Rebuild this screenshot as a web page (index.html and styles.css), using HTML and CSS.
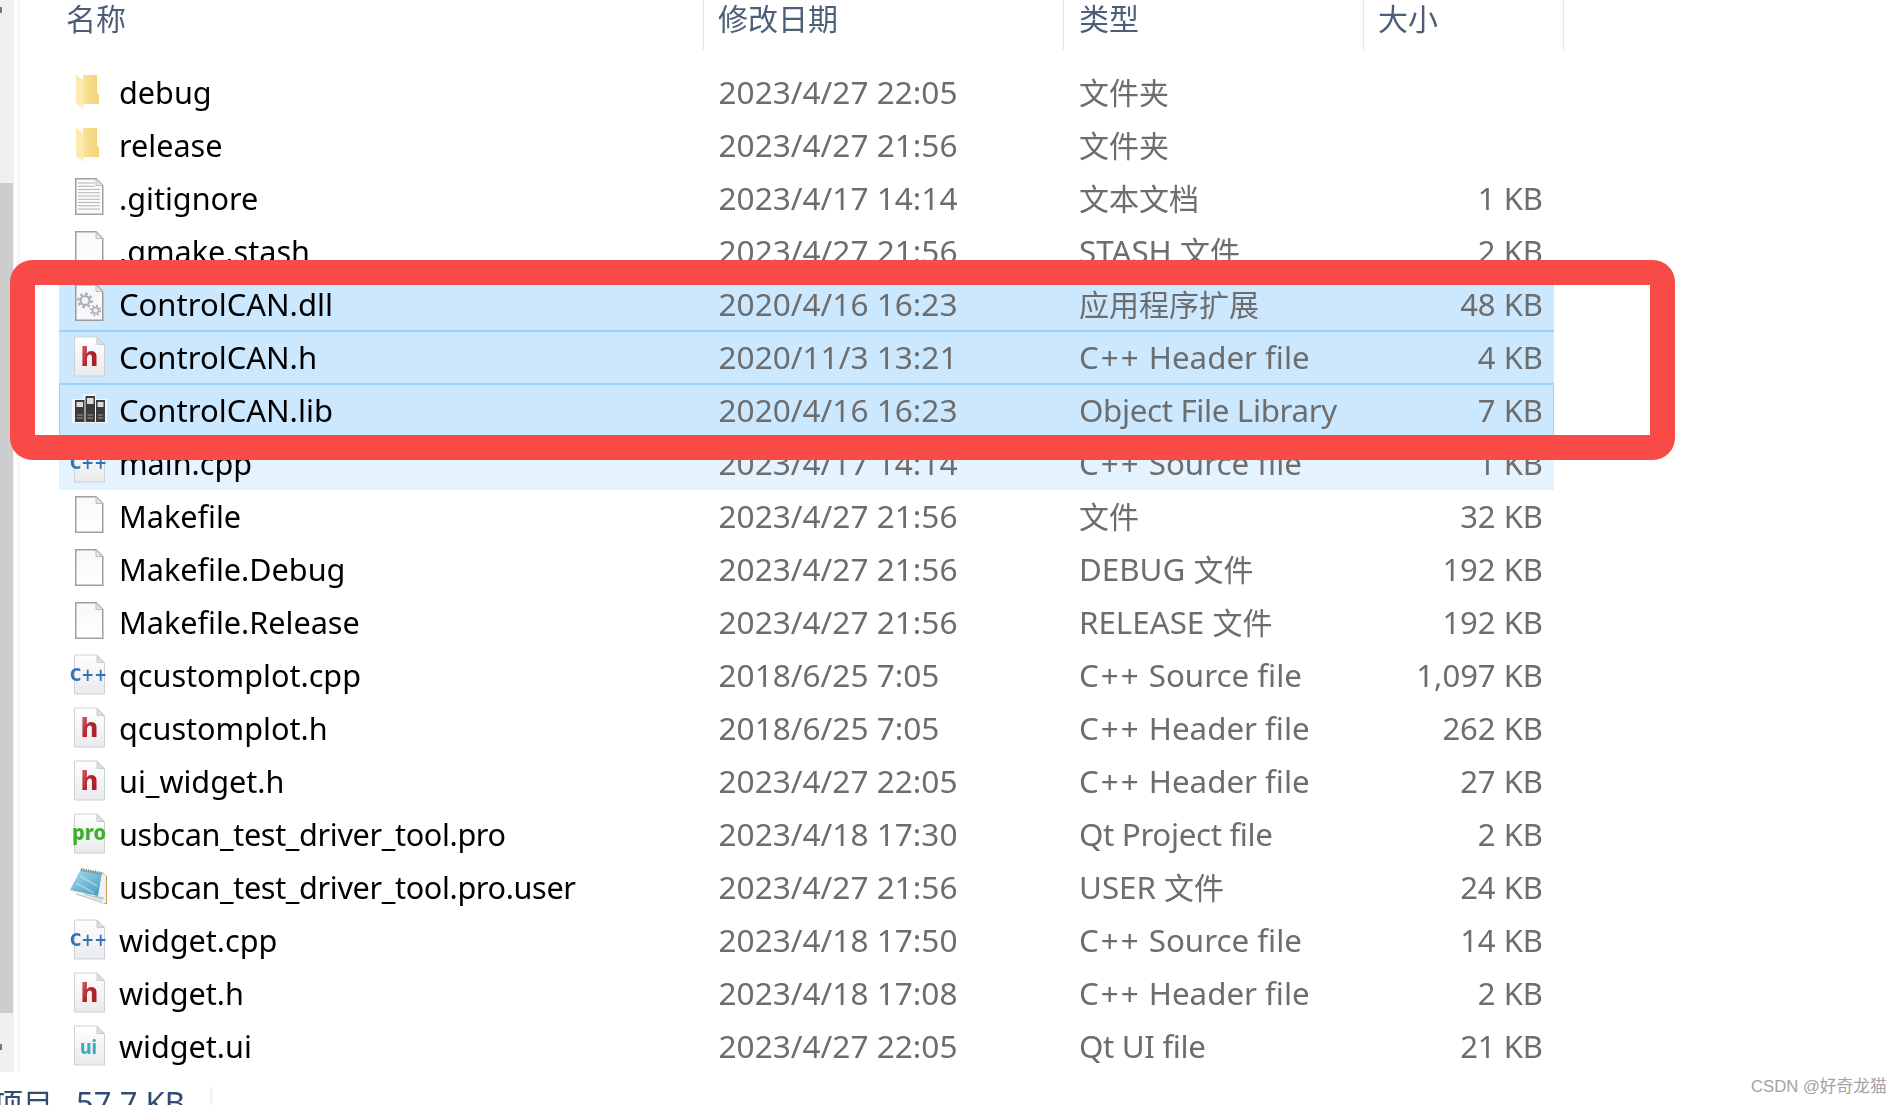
FILE: index.html
```html
<!DOCTYPE html>
<html lang="zh-CN">
<head>
<meta charset="utf-8">
<title>usbcan_test_driver_tool</title>
<link rel="stylesheet" href="styles.css">
</head>
<body>
<svg class="defs" aria-hidden="true">
  <defs>
    <linearGradient id="paper" x1="0" y1="0" x2="0" y2="1"><stop offset="0" stop-color="#ffffff"/><stop offset="1" stop-color="#e9eaec"/></linearGradient>
    <linearGradient id="plain" x1="0" y1="0" x2="0" y2="1"><stop offset="0" stop-color="#f6f8fa"/><stop offset="1" stop-color="#ffffff"/></linearGradient>
    <linearGradient id="fold" x1="0" y1="0" x2="1" y2="0"><stop offset="0" stop-color="#fce9a6"/><stop offset="1" stop-color="#f2d274"/></linearGradient>
    <linearGradient id="red" x1="0" y1="0" x2="1" y2="1"><stop offset="0" stop-color="#dd7a80"/><stop offset="0.5" stop-color="#b3242b"/><stop offset="1" stop-color="#a81c22"/></linearGradient>
    <linearGradient id="note" x1="0" y1="0" x2="0.7" y2="1"><stop offset="0" stop-color="#a7d8e8"/><stop offset="0.5" stop-color="#7cc0d9"/><stop offset="1" stop-color="#4f9fc2"/></linearGradient>
    <symbol id="i-folder" viewBox="0 0 38 44">
      <path d="M6 4H27V22L29 23V33H13V4Z" fill="url(#fold)"/>
      <path d="M6 4L13.500 9V38L6 32Z" fill="#fdeab0"/>
    </symbol>
    <symbol id="i-plain" viewBox="0 0 38 44">
      <path d="M5.750 1.750H26L32.750 8.500V37.250H5.750Z" fill="url(#plain)" stroke="#a0a0a0" stroke-width="1.500"/>
      <path d="M26 2V8.500H32.500Z" fill="#e4e4e4" stroke="#bdbdbd"/>
    </symbol>
    <symbol id="i-text" viewBox="0 0 38 44">
      <path d="M5.750 1.750H26L32.750 8.500V37.250H5.750Z" fill="#fbfbfb" stroke="#a0a0a0" stroke-width="1.500"/>
      <path d="M26 2V8.500H32.500Z" fill="#e4e4e4" stroke="#bdbdbd"/>
      <path d="M8 6H25M8 9.250H25M8 12.500H30M8 15.750H30M8 19H30M8 22.250H30M8 25.500H30M8 28.750H30M8 32H30" stroke="#b4b4b4" stroke-width="1.200"/>
    </symbol>
    <symbol id="i-dll" viewBox="0 0 38 44">
      <path d="M5.750 1.750H26L32.750 8.500V37.250H5.750Z" fill="#f7f8f9" stroke="#9a9a9a" stroke-width="1.500"/>
      <path d="M26 2V8.500H32.500Z" fill="#e4e4e4" stroke="#bdbdbd"/>
      <circle cx="15" cy="17.500" r="6.700" fill="none" stroke="#a9adb2" stroke-width="2.400" stroke-dasharray="2.600 2.650"/>
      <circle cx="15" cy="17.500" r="4.500" fill="#f1f2f3" stroke="#a9adb2" stroke-width="2"/>
      <circle cx="25.500" cy="27.500" r="4.800" fill="none" stroke="#a9adb2" stroke-width="1.800" stroke-dasharray="1.900 1.870"/>
      <circle cx="25.500" cy="27.500" r="3" fill="#f1f2f3" stroke="#a9adb2" stroke-width="1.400"/>
    </symbol>
    <symbol id="i-paper" viewBox="0 0 38 44">
      <path d="M4.500 1H27L34.500 8.500V40H4.500Z" fill="url(#paper)" stroke="#cfd0d2"/>
      <path d="M27 1.500V8.500H34Z" fill="#dfe0e2" stroke="#c9cacc"/>
    </symbol>
    <symbol id="i-lib" viewBox="0 0 38 44">
      <path d="M2 10H13V5H26V10H37V34H2Z" fill="#f3f7fb"/>
      <path d="M5 11H14.500V33H5ZM15.500 7H25V33H15.500ZM26 11H35V33H26Z" fill="#3b3b3b"/>
      <path d="M6.500 13H13V18H6.500ZM17 9H23.500V15H17ZM27.500 13H33.500V18H27.500Z" fill="#dcdcdc"/>
      <path d="M7 26H13M7 29H13M17.500 26H23M17.500 29H23M28 26H33M28 29H33" stroke="#9a9a9a" stroke-width="1"/>
    </symbol>
    <symbol id="i-user" viewBox="0 0 38 44">
      <path d="M32 6L37 10V38H33Z" fill="#c49a55"/>
      <path d="M0 24L30 38.500L36 37V9.500L32 7L28 30Z" fill="#eef2f3"/>
      <path d="M6 28L32 36M14 28L33 33.500M24 30L34 32" stroke="#b5bcc0" stroke-width="1"/>
      <path d="M11 3L32 7L28 30L0 24Z" fill="url(#note)"/>
      <path d="M6 17L24 27M10 10L27 20" stroke="#c4e4ee" stroke-width="1.500" opacity=".6"/>
      <path d="M11 3.500L32 7.500" stroke="#7f878b" stroke-width="3" stroke-dasharray="1.300 1"/>
    </symbol>
  </defs>
</svg>

<div class="window">
  <div class="content">
    <div class="scrollbar">
      <div class="track track-top"><span class="tick"></span></div>
      <div class="thumb"></div>
      <div class="track track-bottom"><span class="tick"></span></div>
    </div>
    <div class="strip"></div>
    <div class="list">
      <div class="head">
        <div class="hcell hname">名称</div>
        <div class="hcell hdate">修改日期</div>
        <div class="hcell htype">类型</div>
        <div class="hcell hsize">大小</div>
      </div>
      <div class="rows">
        <div class="row"><div class="name"><svg class="ico"><use href="#i-folder"/></svg><span>debug</span></div><div class="date">2023/4/27 22:05</div><div class="type"><span class="cjk">文件夹</span></div><div class="size"></div></div>
        <div class="row"><div class="name"><svg class="ico"><use href="#i-folder"/></svg><span>release</span></div><div class="date">2023/4/27 21:56</div><div class="type"><span class="cjk">文件夹</span></div><div class="size"></div></div>
        <div class="row"><div class="name"><svg class="ico"><use href="#i-text"/></svg><span>.gitignore</span></div><div class="date">2023/4/17 14:14</div><div class="type"><span class="cjk">文本文档</span></div><div class="size">1 KB</div></div>
        <div class="row"><div class="name"><svg class="ico"><use href="#i-plain"/></svg><span>.qmake.stash</span></div><div class="date">2023/4/27 21:56</div><div class="type">STASH <span class="cjk">文件</span></div><div class="size">2 KB</div></div>
        <div class="row sel"><div class="name"><svg class="ico"><use href="#i-dll"/></svg><span class="wide">ControlCAN.dll</span></div><div class="date">2020/4/16 16:23</div><div class="type"><span class="cjk">应用程序扩展</span></div><div class="size">48 KB</div></div>
        <div class="row sel"><div class="name"><svg class="ico" viewBox="0 0 38 44"><use href="#i-paper"/><text class="gl-h" x="19.500" y="30">h</text></svg><span class="wide">ControlCAN.h</span></div><div class="date">2020/11/3 13:21</div><div class="type"><span class="plus">C++</span> Header file</div><div class="size">4 KB</div></div>
        <div class="row sel focus"><div class="name"><svg class="ico"><use href="#i-lib"/></svg><span class="wide">ControlCAN.lib</span></div><div class="date">2020/4/16 16:23</div><div class="type tight">Object File Library</div><div class="size">7 KB</div></div>
        <div class="row hover"><div class="name"><svg class="ico" viewBox="0 0 38 44"><use href="#i-paper"/><text class="gl-c" x="0" y="27" textLength="37" lengthAdjust="spacingAndGlyphs">C++</text></svg><span>main.cpp</span></div><div class="date">2023/4/17 14:14</div><div class="type"><span class="plus">C++</span> Source file</div><div class="size">1 KB</div></div>
        <div class="row"><div class="name"><svg class="ico"><use href="#i-plain"/></svg><span>Makefile</span></div><div class="date">2023/4/27 21:56</div><div class="type"><span class="cjk">文件</span></div><div class="size">32 KB</div></div>
        <div class="row"><div class="name"><svg class="ico"><use href="#i-plain"/></svg><span>Makefile.Debug</span></div><div class="date">2023/4/27 21:56</div><div class="type">DEBUG <span class="cjk">文件</span></div><div class="size">192 KB</div></div>
        <div class="row"><div class="name"><svg class="ico"><use href="#i-plain"/></svg><span>Makefile.Release</span></div><div class="date">2023/4/27 21:56</div><div class="type">RELEASE <span class="cjk">文件</span></div><div class="size">192 KB</div></div>
        <div class="row"><div class="name"><svg class="ico" viewBox="0 0 38 44"><use href="#i-paper"/><text class="gl-c" x="0" y="27" textLength="37" lengthAdjust="spacingAndGlyphs">C++</text></svg><span>qcustomplot.cpp</span></div><div class="date">2018/6/25 7:05</div><div class="type"><span class="plus">C++</span> Source file</div><div class="size">1,097 KB</div></div>
        <div class="row"><div class="name"><svg class="ico" viewBox="0 0 38 44"><use href="#i-paper"/><text class="gl-h" x="19.500" y="30">h</text></svg><span>qcustomplot.h</span></div><div class="date">2018/6/25 7:05</div><div class="type"><span class="plus">C++</span> Header file</div><div class="size">262 KB</div></div>
        <div class="row"><div class="name"><svg class="ico" viewBox="0 0 38 44"><use href="#i-paper"/><text class="gl-h" x="19.500" y="30">h</text></svg><span>ui_widget.h</span></div><div class="date">2023/4/27 22:05</div><div class="type"><span class="plus">C++</span> Header file</div><div class="size">27 KB</div></div>
        <div class="row"><div class="name"><svg class="ico" viewBox="0 0 38 44"><use href="#i-paper"/><text class="gl-p" x="2" y="27" textLength="34" lengthAdjust="spacingAndGlyphs">pro</text></svg><span class="tight">usbcan_test_driver_tool.pro</span></div><div class="date">2023/4/18 17:30</div><div class="type tight">Qt Project file</div><div class="size">2 KB</div></div>
        <div class="row"><div class="name"><svg class="ico"><use href="#i-user"/></svg><span class="tight">usbcan_test_driver_tool.pro.user</span></div><div class="date">2023/4/27 21:56</div><div class="type">USER <span class="cjk">文件</span></div><div class="size">24 KB</div></div>
        <div class="row"><div class="name"><svg class="ico" viewBox="0 0 38 44"><use href="#i-paper"/><text class="gl-c" x="0" y="27" textLength="37" lengthAdjust="spacingAndGlyphs">C++</text></svg><span>widget.cpp</span></div><div class="date">2023/4/18 17:50</div><div class="type"><span class="plus">C++</span> Source file</div><div class="size">14 KB</div></div>
        <div class="row"><div class="name"><svg class="ico" viewBox="0 0 38 44"><use href="#i-paper"/><text class="gl-h" x="19.500" y="30">h</text></svg><span>widget.h</span></div><div class="date">2023/4/18 17:08</div><div class="type"><span class="plus">C++</span> Header file</div><div class="size">2 KB</div></div>
        <div class="row"><div class="name"><svg class="ico" viewBox="0 0 38 44"><use href="#i-paper"/><text class="gl-u" x="10" y="29" textLength="17" lengthAdjust="spacingAndGlyphs">ui</text></svg><span>widget.ui</span></div><div class="date">2023/4/27 22:05</div><div class="type tight">Qt UI file</div><div class="size">21 KB</div></div>
      </div>
    </div>
  </div>
  <div class="status">
    <span class="st-items">项目</span>
    <span class="st-size">57.7 KB</span>
    <span class="st-sep"></span>
  </div>
</div>

<div class="redframe"></div>
<div class="watermark">CSDN @好奇龙猫</div>
</body>
</html>
```

FILE: styles.css
```css
* { box-sizing: border-box; }
html, body { margin: 0; padding: 0; background: #fff; }
body {
  width: 1903px;
  height: 1105px;
  overflow: hidden;
  position: relative;
  font-family: "Noto Sans", "Noto Sans CJK SC", sans-serif;
  font-size: 31.300px;
  color: #000;
}
.defs { position: absolute; width: 0; height: 0; }

.window { display: flex; flex-direction: column; height: 1105px; filter: blur(0.35px); }
.content { display: flex; height: 1072px; }

.scrollbar { flex: none; width: 14px; display: flex; flex-direction: column; background: #f0f0f0; }
.track { position: relative; }
.track-top { height: 183px; }
.thumb { height: 830px; width: 13px; background: #cdcdcd; }
.track-bottom { flex: 1; }
.tick { position: absolute; left: 0; width: 2px; height: 6px; background: #777; }
.track-top .tick { top: 7px; }
.track-bottom .tick { top: 31px; }

.strip { flex: none; width: 3px; margin-left: 3px; background: #f7f7f7; }

.list { flex: none; padding-left: 39px; width: 1560px; }

.head { display: flex; height: 50px; margin-bottom: 16px; color: #4d5f78; font-family: "Noto Sans CJK SC", sans-serif; font-size: 30px; line-height: 34px; }
.hcell { flex: none; border-right: 1px solid #e6e6e6; padding-left: 14px; }
.hname { width: 645px; padding-left: 7px; }
.hdate { width: 360px; }
.htype { width: 300px; padding-left: 15px; }
.hsize { width: 200px; }

.row {
  display: grid;
  grid-template-columns: 659.500px 360.500px 1fr 200px;
  align-items: center;
  width: 1495px;
  height: 53px;
  padding-bottom: 2px;
  border-top: 1px solid transparent;
  border-bottom: 1px solid transparent;
  line-height: 40px;
}
.sel { background: #cce8ff; border-top-color: #99d1ff; border-bottom-color: #99d1ff; }
.focus { box-shadow: inset 1px 0 #99d1ff, inset -1px 0 #99d1ff; }
.hover { background: #e5f3ff; }

.name { display: flex; align-items: center; gap: 11px; padding-left: 11px; font-size: 30.600px; }
.name .wide { font-size: 31px; }
.ico { width: 38px; height: 44px; flex: none; margin-top: 2px; }
.date, .type, .size { color: #6d6d6d; }
.date { font-size: 31.600px; }
.size { text-align: right; padding-right: 11px; font-size: 31px; }
.cjk { font-family: "Noto Sans CJK SC", sans-serif; font-size: 30px; }
.tight { letter-spacing: -0.350px; }
.plus { letter-spacing: 2px; }

.gl-h { font: 800 27px "Noto Sans", sans-serif; fill: url(#red); text-anchor: middle; }
.gl-c { font: 700 17px "DejaVu Sans", sans-serif; fill: #2f74ba; }
.gl-p { font: 800 22px "Noto Sans", sans-serif; fill: #3fb02b; }
.gl-u { font: 800 20px "Noto Sans", sans-serif; fill: #3fa9c2; }

.status { position: relative; display: flex; height: 33px; color: #2f4d72; font-size: 30px; line-height: 40px; padding-top: 10px; font-family: "Noto Sans CJK SC", sans-serif; }
.st-items { margin-left: -7px; width: 83px; }
.st-size { font-family: "Noto Sans", sans-serif; font-size: 31px; width: 134px; }
.st-sep { width: 3px; height: 23px; background: #f3f3f3; margin-top: 5px; }

.redframe {
  position: absolute;
  left: 10px;
  top: 260px;
  width: 1665px;
  height: 200px;
  border: 25px solid #f84b48;
  border-radius: 22px;
}
.watermark {
  position: absolute;
  left: 1751px;
  top: 1077px;
  font: 16.700px/20px "Liberation Sans", "Noto Sans CJK SC", sans-serif;
  color: #a3a3a3;
}
```
